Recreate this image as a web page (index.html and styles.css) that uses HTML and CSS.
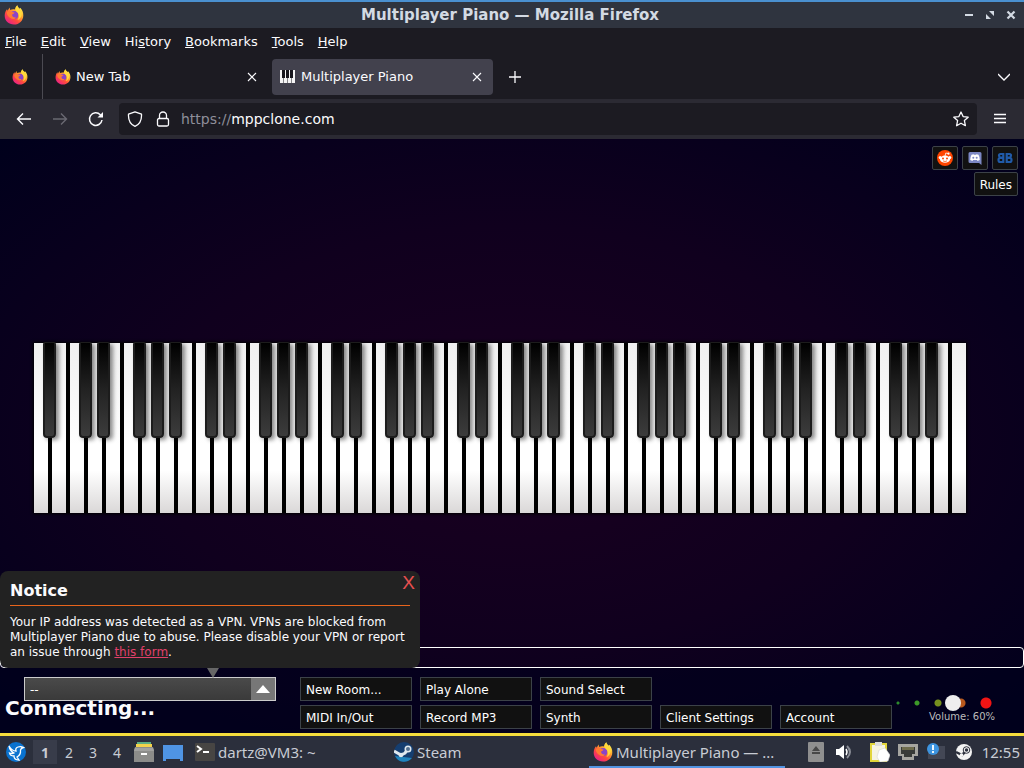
FILE: index.html
```html
<!DOCTYPE html>
<html lang="en">
<head>
    <meta charset="UTF-8">
    <meta name="viewport" content="width=device-width, initial-scale=1.0">
    <title>Multiplayer Piano</title>
    <link rel="stylesheet" href="styles.css">
</head>
<body>

    <!-- Shared icons -->
    <svg class="symbols" aria-hidden="true">
        <defs>
            <linearGradient id="fox-body" x1="0.85" y1="0.1" x2="0.2" y2="0.95">
                <stop offset="0" stop-color="#fff04a"/>
                <stop offset="0.35" stop-color="#ffa22e"/>
                <stop offset="0.65" stop-color="#ff4a3c"/>
                <stop offset="1" stop-color="#e8208a"/>
            </linearGradient>
        </defs>
        <symbol id="firefox" viewBox="0 0 20 20">
            <path fill="url(#fox-body)" d="M10 19.5C4.600 19.500 .7 15.600 .7 10.700C.7 8 1.600 5.800 3 4.200L3.600 5.800L5.600 2.600L6.200 5C7.600 4.200 9.500 4 11 4.500C11 3 11.900 1.200 13.300 .2C13.500 2 14.600 2.800 15.800 3.800L16.300 2.800C18.300 5 19.400 7.400 19.300 10.400C19.200 15.600 15.300 19.500 10 19.500Z"/>
            <circle cx="10.300" cy="10" r="4" fill="#8a45c8"/>
            <path fill="#ff7a32" d="M2.600 7.500C4 6 6.500 6 8 7L10.500 7.600C10.300 8.600 9 9 8.200 9.600C7.800 11.500 9.500 13 12 12.500C11 14.500 8 14.500 6 12.800C4.500 12 3 10 2.600 7.500Z"/>
            <path fill="#ffd93b" d="M13.300 .2C13.500 3 17.500 4 17.800 8C18 12 15.500 14.500 13.500 15C15.500 12.500 15.300 9.500 13.500 7.500C11.500 6 10.800 3.500 13.300 .2Z"/>
        </symbol>
        <symbol id="close" viewBox="0 0 10 10">
            <path d="M1 1L9 9M9 1L1 9" fill="none" stroke="currentColor" stroke-width="1.100"/>
        </symbol>
    </svg>

    <header class="titlebar">
        <svg class="icon-20"><use href="#firefox"/></svg>
        <h1>Multiplayer Piano — Mozilla Firefox</h1>
        <div class="window-buttons">
            <button aria-label="Minimize"><svg viewBox="0 0 10 10"><path d="M1 5H9" stroke="#d3dae3" stroke-width="2"/></svg></button>
            <button aria-label="Restore"><svg viewBox="0 0 10 10"><path d="M4 1H9V6ZM1 4V9H6Z" fill="#d3dae3"/></svg></button>
            <button aria-label="Close"><svg viewBox="0 0 10 10"><path d="M1.500 1.500L8.500 8.500M8.500 1.500L1.500 8.500" stroke="#d3dae3" stroke-width="2.200"/></svg></button>
        </div>
    </header>

    <nav class="menubar">
        <button><u>F</u>ile</button>
        <button><u>E</u>dit</button>
        <button><u>V</u>iew</button>
        <button>Hi<u>s</u>tory</button>
        <button><u>B</u>ookmarks</button>
        <button><u>T</u>ools</button>
        <button><u>H</u>elp</button>
    </nav>

    <div class="tabs">
        <div class="pinned"><svg class="icon-16"><use href="#firefox"/></svg></div>
        <div class="tab">
            <svg class="icon-16"><use href="#firefox"/></svg>
            <span>New Tab</span>
            <button aria-label="Close tab"><svg class="icon-10"><use href="#close"/></svg></button>
        </div>
        <div class="tab active">
            <svg class="icon-16" viewBox="0 0 16 16">
                <path fill="#f4f4f4" d="M0 1H15V14H0Z"/>
                <path fill="#17161c" d="M2 1H5V9H2ZM6 1H9V9H6ZM10 1H13V9H10ZM3.300 9H3.800V14H3.300ZM7.300 9H7.800V14H7.300ZM11.300 9H11.800V14H11.300Z"/>
            </svg>
            <span>Multiplayer Piano</span>
            <button aria-label="Close tab"><svg class="icon-10"><use href="#close"/></svg></button>
        </div>
        <button class="new-tab" aria-label="New tab"><svg viewBox="0 0 12 12"><path d="M6 0V12M0 6H12" stroke="#fbfbfe" stroke-width="1.300"/></svg></button>
        <button class="all-tabs" aria-label="List all tabs"><svg viewBox="0 0 12 12"><path d="M0 3L6 9L12 3" fill="none" stroke="#fbfbfe" stroke-width="1.300"/></svg></button>
    </div>

    <div class="toolbar">
        <button aria-label="Back"><svg class="icon-16" viewBox="0 0 16 16"><path d="M15 8H1.500M7 2.500L1.500 8L7 13.500" fill="none" stroke="#fbfbfe" stroke-width="1.400"/></svg></button>
        <button aria-label="Forward" disabled><svg class="icon-16" viewBox="0 0 16 16"><path d="M1 8H14.500M9 2.500L14.500 8L9 13.500" fill="none" stroke="#6a6972" stroke-width="1.400"/></svg></button>
        <button aria-label="Reload"><svg class="icon-16" viewBox="0 0 16 16"><path d="M14 9A6.300 6.300 0 1 1 12.300 3.700L14 5.300" fill="none" stroke="#fbfbfe" stroke-width="1.500"/><path d="M15 1V6.500H9.500Z" fill="#fbfbfe"/></svg></button>
        <div class="urlbar">
            <svg class="icon-16" viewBox="0 0 16 16"><path d="M8 .8L14.500 3.200C14.800 8.500 12.500 13.300 8 15.300C3.500 13.300 1.200 8.500 1.500 3.200Z" fill="none" stroke="#fbfbfe" stroke-width="1.300" stroke-linejoin="round"/></svg>
            <svg class="icon-16" viewBox="0 0 16 16"><rect x="2.500" y="7.500" width="11" height="7.500" rx="1.500" fill="none" stroke="#fbfbfe" stroke-width="1.300"/><path d="M4.500 7.500V4.500A3.500 3.500 0 0 1 11.500 4.500V7.500" fill="none" stroke="#fbfbfe" stroke-width="1.300"/></svg>
            <div class="url" role="textbox" aria-label="Address"><span>https://</span>mppclone.com</div>
            <button aria-label="Bookmark this page"><svg class="icon-16" viewBox="0 0 16 16"><path d="M8 1L10.100 5.600L15.200 6.200L11.400 9.600L12.400 14.700L8 12.200L3.600 14.700L4.600 9.600L.8 6.200L5.900 5.600Z" fill="none" stroke="#fbfbfe" stroke-width="1.300" stroke-linejoin="round"/></svg></button>
        </div>
        <button aria-label="Menu"><svg class="icon-16" viewBox="0 0 16 16"><path d="M2 3.500H14M2 7.500H14M2 11.500H14" stroke="#fbfbfe" stroke-width="1.300"/></svg></button>
    </div>

    <main class="page">
        <div class="links">
            <a class="box" href="#reddit" aria-label="Reddit">
                <svg class="icon-16" viewBox="0 0 16 16">
                    <circle cx="8" cy="8" r="8" fill="#ff4500"/>
                    <circle cx="3.200" cy="7.500" r="1.500" fill="#fff"/><circle cx="12.800" cy="7.500" r="1.500" fill="#fff"/>
                    <ellipse cx="8" cy="9.200" rx="5" ry="3.600" fill="#fff"/>
                    <path d="M8 6L8.800 3L11.200 3.500" fill="none" stroke="#fff" stroke-width=".8"/><circle cx="11.500" cy="3.700" r="1.100" fill="#fff"/>
                    <circle cx="6" cy="8.600" r="1" fill="#ff4500"/><circle cx="10" cy="8.600" r="1" fill="#ff4500"/>
                    <path d="M6 10.900Q8 12.200 10 10.900" fill="none" stroke="#ff4500" stroke-width=".7"/>
                </svg>
            </a>
            <a class="box" href="#discord" aria-label="Discord">
                <svg class="icon-16" viewBox="0 0 16 16">
                    <path d="M3 2H13Q14.500 2 14.500 3.500V15L12 13H3Q1.500 13 1.500 11.500V3.500Q1.500 2 3 2Z" fill="#7c88c4"/>
                    <path d="M4.500 4.700L6.500 4.200L7 4.800H9L9.500 4.200L11.500 4.700Q13 7.500 12.800 10L10.500 11L10 10H6L5.500 11L3.200 10Q3 7.500 4.500 4.700Z" fill="#fff"/>
                    <circle cx="6.300" cy="7.800" r="1" fill="#7c88c4"/><circle cx="9.700" cy="7.800" r="1" fill="#7c88c4"/>
                </svg>
            </a>
            <a class="box" href="#bb" aria-label="BB">
                <svg class="icon-16" viewBox="0 0 16 16">
                    <g fill="none" stroke="#205aa8" stroke-width="2.200">
                        <path d="M6.300 4H3.500Q2 4 2 5.500T3.500 7.700H6.300ZM6.300 8H3Q1.500 8 1.500 10T3 12H6.300Z"/>
                        <path d="M9.700 4H12.500Q14 4 14 5.500T12.500 7.700H9.700ZM9.700 8H13Q14.500 8 14.500 10T13 12H9.700Z"/>
                    </g>
                </svg>
            </a>
            <a class="box rules" href="#rules">Rules</a>
        </div>

        <div class="piano" id="piano"></div>

        <input class="chat" type="text" aria-label="Chat">

        <div class="bottom">
            <div class="room">
                <div class="room-select">
                    <select aria-label="Room"><option>--</option></select>
                    <svg viewBox="0 0 24 22"><path d="M5 15L12 7L19 15Z" fill="#fff"/></svg>
                </div>
                <p class="status">Connecting...</p>
            </div>
            <div class="buttons">
                <button class="box">New Room...</button>
                <button class="box">Play Alone</button>
                <button class="box">Sound Select</button>
                <button class="box second-row">MIDI In/Out</button>
                <button class="box">Record MP3</button>
                <button class="box">Synth</button>
                <button class="box">Client Settings</button>
                <button class="box">Account</button>
            </div>
            <div class="volume">
                <input type="range" id="volume" min="0" max="100" value="60">
                <label for="volume">Volume: 60%</label>
            </div>
        </div>

        <section class="notice">
            <h2>Notice</h2>
            <p>Your IP address was detected as a VPN. VPNs are blocked from Multiplayer Piano due to abuse. Please disable your VPN or report an issue through <a href="#form">this form</a>.</p>
            <button aria-label="Close notice">X</button>
        </section>
    </main>

    <footer class="taskbar">
        <button class="start" aria-label="Start">
            <svg class="icon-20" viewBox="0 0 20 20"><circle cx="10" cy="10" r="10" fill="#0a72cf"/><path d="M3 4Q6 9 10 9Q9 6 12 5Q15 4 17.500 5.500Q15 6 14.500 8Q15 13 11 15L13 18Q8 18 8 14Q4 14 3.500 11Q6 12 8 11Q4 9 3 4Z" fill="none" stroke="#fff" stroke-width="1.300"/></svg>
        </button>
        <div class="desktops">
            <button class="current">1</button>
            <button>2</button>
            <button>3</button>
            <button>4</button>
        </div>
        <div class="launchers">
            <button aria-label="Files"><svg class="icon-20" viewBox="0 0 20 20"><path d="M3 0H17V3H3Z" fill="#5cae84"/><path d="M2 2H18V6H2Z" fill="#f3d24b"/><path d="M1 5H19L20 8V20H0V8Z" fill="#8c8c8a"/><path d="M1 6H19L20 9H0Z" fill="#a2a2a0"/><rect x="7" y="11" width="6" height="2" fill="#fff"/></svg></button>
            <button aria-label="Show desktop"><svg class="icon-20" viewBox="0 0 20 20"><path d="M0 3H20V19H17V17H3V19H0Z" fill="#4f94e4"/></svg></button>
        </div>
        <div class="tasks">
            <button>
                <svg class="icon-20" viewBox="0 0 20 20"><rect y="1" width="20" height="18" rx="1" fill="#474543"/><path d="M2 4L6 7L2 10" fill="none" stroke="#fff" stroke-width="2"/><path d="M8 10H14" stroke="#fff" stroke-width="2"/></svg>
                <span>dartz@VM3: ~</span>
            </button>
            <button>
                <svg class="icon-20" viewBox="0 0 20 20"><circle cx="10" cy="10" r="10" fill="#153e70"/><path d="M1 14A10 10 0 0 0 18 16Z" fill="#2084bd"/><path d="M0 9L7 13L11 11L14 7" fill="none" stroke="#dfe8ee" stroke-width="3"/><circle cx="14" cy="7" r="3.500" fill="#dfe8ee"/><circle cx="14" cy="7" r="2" fill="#53708f"/><circle cx="7" cy="13" r="2.300" fill="#dfe8ee"/></svg>
                <span>Steam</span>
            </button>
            <button class="current">
                <svg class="icon-20"><use href="#firefox"/></svg>
                <span>Multiplayer Piano — ...</span>
            </button>
        </div>
        <div class="tray">
            <svg class="icon-20" viewBox="0 0 20 20"><rect x="2" width="16" height="20" rx="1" fill="#8f8f8f"/><path d="M6 9L10 4L14 9ZM6 10H14V12H6Z" fill="#474747"/></svg>
            <svg class="icon-20 speaker" viewBox="0 0 20 20"><path d="M2 7H5L10 3V17L5 13H2Z" fill="#fff"/><path d="M12 7Q14 10 12 13" fill="none" stroke="#fff" stroke-width="1.500"/><path d="M13 4Q19 10 13 16" fill="none" stroke="#8b8e97" stroke-width="2"/></svg>
            <svg class="icon-20" viewBox="0 0 20 20"><path d="M1 2H16V19H1Z" fill="#f5f3e2" stroke="#e2d53c" stroke-width="2"/><rect x="5" width="7" height="4" fill="#ddd"/><path d="M9 8L15 6L20 13L18 19L10 20L7 15Z" fill="#fff" stroke="#d5d5d5" stroke-width=".6"/></svg>
            <svg class="icon-20" viewBox="0 0 20 20"><path d="M0 2H20V14H16V18H4V14H0Z" fill="#a6a5a0"/><path d="M3 5H17V12H14V15H6V12H3Z" fill="#383a38"/><path d="M5 5V8M7 5V8M9 5V8M11 5V8M13 5V8M15 5V8" stroke="#c3b96e" stroke-width=".8"/></svg>
            <svg class="icon-20" viewBox="0 0 20 20"><rect x="2" y="4" width="17" height="13" fill="#434755"/><circle cx="7" cy="7" r="6" fill="#3d94e0"/><path d="M7 3V8M7 9V11" stroke="#fff" stroke-width="1.800"/></svg>
            <svg class="icon-20" viewBox="0 0 20 20"><circle cx="10" cy="10" r="8" fill="#f3f3f3"/><path d="M2 10L8 13L13 8" fill="none" stroke="#2b2f3c" stroke-width="2.500"/><circle cx="12.500" cy="8" r="3.300" fill="#f3f3f3" stroke="#2b2f3c"/><circle cx="12.500" cy="8" r="1.700" fill="#2b2f3c"/><circle cx="7.500" cy="13" r="1.800" fill="#f3f3f3"/></svg>
        </div>
        <time>12:55</time>
    </footer>

    <script>
        // 88 keys: 52 white ones from A0 to C8, with a black key after A, C, D, F and G
        const piano = document.getElementById('piano');
        const notes = "ABCDEFG";

        for (let i = 0; i < 52; i++) {
            const white = document.createElement('div');
            white.className = 'white';
            if ("ACDFG".includes(notes[i % 7]) && i < 51) {
                const black = document.createElement('div');
                black.className = 'black';
                white.appendChild(black);
            }
            piano.appendChild(white);
        }
    </script>

</body>
</html>
```
FILE: styles.css
```css
* {
    box-sizing: border-box;
}

body {
    margin: 0;
    min-height: 100vh;
    display: flex;
    flex-direction: column;
    background-color: #1c1b22;
    color: #fbfbfe;
    font-family: "DejaVu Sans", sans-serif;
    font-size: 13px;
}

h1, h2, p {
    margin: 0;
}

button {
    padding: 0;
    border: none;
    background: none;
    color: inherit;
    font: inherit;
    cursor: pointer;
}

svg {
    display: block;
    flex: none;
}

.symbols {
    position: absolute;
    width: 0;
    height: 0;
}

.icon-10 {
    width: 10px;
    height: 10px;
}

.icon-16 {
    width: 16px;
    height: 16px;
}

.icon-20 {
    width: 20px;
    height: 20px;
}

/* Window frame */
.titlebar {
    height: 28px;
    padding: 0 8px 0 4px;
    border-top: 2px solid #4a90d0;
    display: grid;
    grid-template-columns: 1fr auto 1fr;
    align-items: center;
    background-color: #2f343f;
}

.titlebar h1 {
    font-size: 15px;
    color: #d3dae3;
}

.window-buttons {
    display: flex;
    gap: 11px;
    justify-self: end;
}

.window-buttons svg {
    width: 10px;
    height: 10px;
}

.menubar {
    height: 26px;
    padding: 0 5px;
    display: flex;
    align-items: center;
    gap: 14px;
}

/* Tabs */
.tabs {
    height: 45px;
    display: flex;
    align-items: center;
}

.pinned {
    width: 43px;
    height: 45px;
    padding: 15px 0 0 12px;
    border-right: 1px solid #4b4a52;
}

.tab {
    width: 221px;
    height: 36px;
    margin-left: 4px;
    padding: 0 11px 0 8px;
    display: flex;
    align-items: center;
    gap: 5px;
    border-radius: 4px;
}

.tab span {
    flex: 1;
}

.tab.active {
    background-color: #42414d;
}

.new-tab {
    margin-left: 16px;
}

.all-tabs {
    margin: 0 14px 0 auto;
}

.new-tab svg, .all-tabs svg {
    width: 12px;
    height: 12px;
}

/* Address bar */
.toolbar {
    height: 40px;
    padding: 0 16px;
    display: flex;
    align-items: center;
    gap: 20px;
    background-color: #2b2a33;
}

.urlbar {
    flex: 1;
    height: 32px;
    margin: 0 -5px;
    padding: 0 8px;
    display: flex;
    align-items: center;
    gap: 12px;
    border-radius: 4px;
    background-color: #1c1b22;
    font-size: 14px;
}

.url {
    flex: 1;
    margin-left: -2px;
}

.url span {
    color: #8f8f9a;
}

/* Web page */
.page {
    flex: 1;
    position: relative;
    display: flex;
    flex-direction: column;
    justify-content: space-between;
    background: radial-gradient(ellipse at center, #1a0020 0%, #10001e 50%, #00001c 100%);
    font-size: 12px;
}

.box {
    height: 24px;
    padding: 1px 5px 0;
    display: flex;
    align-items: center;
    border: 1px solid #3c4248;
    background-color: #111;
    color: #fff;
    text-align: left;
    text-decoration: none;
}

.links {
    width: 92px;
    margin: 7px 6px 0 auto;
    display: flex;
    flex-wrap: wrap;
    justify-content: flex-end;
    gap: 2px 4px;
}

.links .box {
    min-width: 26px;
    padding: 0 4px;
    border-radius: 2px;
}

.links .rules {
    padding: 1px 5px 0;
}

.piano {
    height: 170px;
    margin: 147px 58px 134px 34px;
    display: flex;
    gap: 4px;
    background-color: #000;
    box-shadow: 0 0 3px 1px #000;
}

.white {
    flex: 1;
    position: relative;
    background: linear-gradient(#f0f0f0 0%, #fff 60%, #fff 75%, #dad8d8 100%);
}

.black {
    position: absolute;
    z-index: 1;
    top: -1px;
    left: 9px;
    width: 13px;
    height: 96px;
    border: 2px solid #1c1c1c;
    border-top-width: 1px;
    border-radius: 2px 2px 4px 4px;
    background: linear-gradient(#000, #222 50%, #3c3c3c);
    box-shadow: 3px 2px 4px rgba(0, 0, 0, 0.45);
}

.chat {
    width: 100%;
    height: 21px;
    border: 1px solid #fff;
    border-radius: 4px;
    background: transparent;
    color: #fff;
}

.bottom {
    height: 65px;
    padding-top: 9px;
    display: flex;
    background-color: rgba(0, 0, 28, 0.6);
}

.room {
    width: 300px;
}

.room-select {
    width: 252px;
    height: 24px;
    margin-left: 24px;
    display: flex;
    border: 1px solid #ccc;
    background-color: #777;
}

.room-select select {
    flex: 1;
    padding: 1px 5px 0;
    appearance: none;
    border: none;
    border-radius: 0;
    background: linear-gradient(#4a4a4a, #3a3a3a);
    color: #fff;
    font: inherit;
}

.room-select svg {
    width: 24px;
    height: 22px;
}

.status {
    padding-left: 5px;
    font-size: 20px;
    font-weight: bold;
    line-height: 14px;
}

.buttons {
    display: grid;
    grid-template-columns: repeat(5, 112px);
    grid-template-rows: 24px 24px;
    gap: 4px 8px;
}

.second-row {
    grid-column: 1;
}

.volume {
    width: 102px;
    margin: 18px 29px 0 auto;
    display: flex;
    flex-direction: column;
    text-align: right;
    color: #bbb;
    font-size: 10px;
}

.volume input {
    width: 100%;
    height: 16px;
    margin: 0;
    appearance: none;
    background:
        radial-gradient(circle at 5px 8px, #2c8a2c 1px, transparent 2px),
        radial-gradient(circle at 24px 8px, #3c9a28 2px, transparent 3px),
        radial-gradient(circle at 45px 8px, #76901e 3px, transparent 4px),
        radial-gradient(circle at 68px 8px, #b8581c 4px, transparent 5px),
        radial-gradient(circle at 93px 8px, #f01414 5px, transparent 6px);
}

.volume input::-webkit-slider-thumb {
    appearance: none;
    width: 16px;
    height: 16px;
    border-radius: 50%;
    background-color: #eee;
}

/* Notification above the room list */
.notice {
    position: absolute;
    left: 0;
    bottom: 65px;
    width: 420px;
    padding: 11px 10px 8px;
    border-radius: 8px;
    background-color: #222;
    line-height: 15px;
}

.notice::after {
    content: "";
    position: absolute;
    left: 207px;
    top: 100%;
    border: 6px solid transparent;
    border-top: 10px solid #666;
    border-bottom: none;
}

.notice h2 {
    margin-bottom: 9px;
    padding-bottom: 5px;
    border-bottom: 1px solid #e8641c;
    font-size: 16px;
    line-height: 18px;
}

.notice a {
    color: #e0406a;
}

.notice button {
    position: absolute;
    top: 4px;
    right: 5px;
    color: #e85050;
    font-family: "Liberation Sans", Arial, sans-serif;
    font-size: 19px;
    line-height: 16px;
}

/* Desktop panel */
.taskbar {
    height: 35px;
    padding: 0 4px 0 6px;
    display: flex;
    align-items: center;
    border-top: 3px solid #f4dc3c;
    background-color: #2b2f3c;
    color: #c8ccd4;
    font-family: "Noto Sans", sans-serif;
    font-size: 15px;
}

.start {
    margin-right: 7px;
}

.desktops {
    display: flex;
    font-size: 14px;
}

.desktops button {
    width: 24px;
    height: 24px;
}

.desktops .current {
    background-color: #383c4a;
    font-weight: bold;
}

.launchers {
    margin-left: 5px;
    display: flex;
    gap: 9px;
}

.tasks {
    flex: 1;
    align-self: stretch;
    margin: 0 19px 0 8px;
    display: flex;
    gap: 3px;
}

.tasks button {
    width: 196px;
    padding: 0 8px 0 4px;
    display: flex;
    align-items: center;
    gap: 3px;
    border-top: 2px solid transparent;
    border-bottom: 2px solid transparent;
    white-space: nowrap;
}

.tasks .current {
    border-bottom-color: #5294e2;
}

.tray {
    display: flex;
    gap: 8px;
}

.speaker {
    margin-right: 8px;
}

time {
    margin-left: 8px;
}
```
